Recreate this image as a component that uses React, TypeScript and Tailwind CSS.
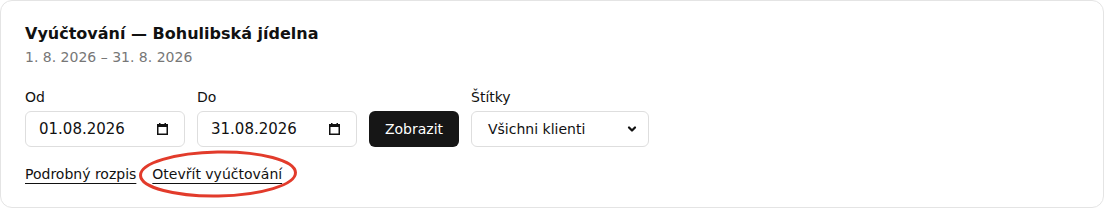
import { ChevronDown } from 'lucide-react'

export default function App() {
  return (
    <div className="w-[1104px] h-[208px] bg-white p-0 text-[#111] font-['DejaVu_Sans',sans-serif]">
      <div className="h-[208px] rounded-[12px] border border-[#e4e4e4] bg-white px-6 pt-[23px]">
        <h2 className="text-base font-bold leading-[19px]">Vyúčtování — Bohulibská jídelna</h2>
        <p className="mt-[6px] text-sm leading-[17px] text-[#777]">1. 8. 2026 – 31. 8. 2026</p>

        {/* Filtry */}
        <div className="mt-[23px] flex items-end gap-3">
          <DateField label="Od" value="01.08.2026" />
          <DateField label="Do" value="31.08.2026" />
          <button className="h-9 w-[90px] rounded-md bg-[#161616] text-sm text-white">Zobrazit</button>
          <div>
            <label className="mb-[5px] block text-sm leading-[17px]">Štítky</label>
            <div className="flex h-9 w-[178px] items-center justify-between rounded-md border border-[#dedede] bg-white pl-4 pr-[10px] text-sm">
              <span>Všichni klienti</span>
              <ChevronDown size={12} strokeWidth={4.5} className="text-[#111]" />
            </div>
          </div>
        </div>

        <div className="mt-[19px] flex gap-4 text-sm leading-[17px]">
          <a href="#" className="underline underline-offset-[4px]">Podrobný rozpis</a>
          <span className="relative">
            <a href="#" className="underline underline-offset-[4px]">Otevřít vyúčtování</a>
            <svg className="pointer-events-none absolute left-[-14px] top-[-16px] h-[48px] w-[160px] overflow-visible" viewBox="0 0 160 48">
              <ellipse cx="80" cy="24" rx="77.5" ry="22" fill="none" stroke="#e23b2b" strokeWidth="3" transform="rotate(-1 80 24)" />
            </svg>
          </span>
        </div>
      </div>
    </div>
  )
}

function DateField({ label, value }: any) {
  return (
    <div>
      <label className="mb-[5px] block text-sm leading-[17px]">{label}</label>
      <div className="flex h-9 w-[160px] items-center justify-between rounded-md border border-[#dedede] bg-white pl-[13px] pr-[16px] text-[15px]">
        <span>{value}</span>
        <svg width="11" height="12" viewBox="0 0 11 12" className="text-[#111]">
          <rect x="0.75" y="1.75" width="9.5" height="9.5" fill="none" stroke="currentColor" strokeWidth="1.5" />
          <rect x="0" y="1" width="11" height="3" fill="currentColor" />
          <rect x="2" y="0" width="1.5" height="2" fill="currentColor" />
          <rect x="7.5" y="0" width="1.5" height="2" fill="currentColor" />
        </svg>
      </div>
    </div>
  )
}
